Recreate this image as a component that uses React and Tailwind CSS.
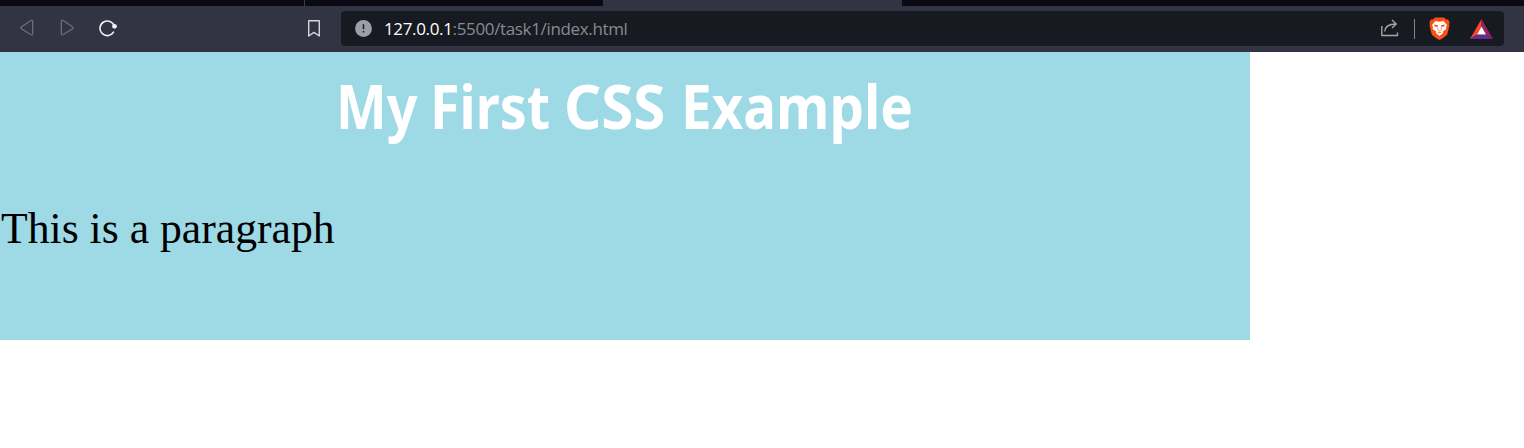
import React from "react";

function TabStrip() {
  return (
    <div className="flex h-[6px] bg-[#0b0a14]">
      <div className="w-[305px] border-r border-[#3b3c45]" />
      <div className="w-[298px]" />
      <div className="w-[299px] bg-[#323443]" />
    </div>
  );
}

function Toolbar() {
  return (
    <div className="flex h-[46px] items-start bg-[#323443] pt-[5px]">
      <div className="flex h-[34px] w-[341px] items-center">
        <svg className="ml-[20px] h-[18px] w-[14px]" viewBox="0 0 14 18" fill="none" stroke="#6c6e7a" strokeWidth="1.3">
          <path d="M1.3 8 10.8 1.5Q12.7.5 12.7 2.7V14.3Q12.7 16.5 10.8 15.5L1.3 9.7Q.5 9 1.3 8Z" />
        </svg>
        <svg className="ml-[26px] h-[18px] w-[14px]" viewBox="0 0 14 18" fill="none" stroke="#6c6e7a" strokeWidth="1.3">
          <path d="M12.7 8 3.2 1.5Q1.3.5 1.3 2.7V14.3Q1.3 16.5 3.2 15.5L12.7 9.7Q13.5 9 12.7 8Z" />
        </svg>
        <svg className="ml-[25px] h-[18px] w-[18px]" viewBox="0 0 18 18" fill="none" stroke="#f0f0f2" strokeWidth="1.6">
          <path d="M15.3 7.2A7.3 7.3 0 1 0 14.5 13.2" strokeLinecap="round" />
          <circle cx="15.5" cy="7.3" r="2.4" fill="#f0f0f2" stroke="none" />
        </svg>
        <svg className="ml-[190px] h-[18px] w-[14px]" viewBox="0 0 14 18" fill="none" stroke="#d6d6dc" strokeWidth="1.4">
          <path d="M1.7 1.7H12.3V17L7 13.4 1.7 17Z" strokeLinejoin="round" />
        </svg>
      </div>
      <div className="flex h-[35px] w-[1163px] items-center rounded-[4px] bg-[#171a20]">
        <svg className="ml-[14px] h-[17px] w-[17px]" viewBox="0 0 17 17">
          <circle cx="8.5" cy="8.5" r="8.4" fill="#9c9ea9" />
          <path d="M8.5 4.2V9.2M8.5 11V12.6" stroke="#1b1d25" strokeWidth="1.5" />
        </svg>
        <div className="ml-[12px] w-[245px] whitespace-nowrap font-['Open_Sans','Noto_Sans',sans-serif] text-[17px] leading-[24px] tracking-[-0.35px] text-[#878a93]">
          <span className="text-white">127.0.0.1</span>:5500/task1/index.html
        </div>
        <div className="ml-auto flex h-full items-center">
          <svg className="mb-px h-[20px] w-[20px]" viewBox="0 0 20 20" fill="none" stroke="#a5a6aa" strokeWidth="1.4">
            <path d="M1.8 8V17.5H17.5V14.5" strokeLinejoin="round" />
            <path d="M4.8 13.5C5 8.5 8.8 6 16 6M12 2 16.2 6 12 10" />
          </svg>
          <div className="ml-[14px] h-[20px] w-px bg-[#85868a]" />
          <svg className="ml-[14px] h-[23px] w-[21px]" viewBox="0 0 21 23">
            <path d="M6 .5H15L17 2.6 19 2.4 20.7 5.2 20 7.2 20.5 8.5 18.3 17.2Q17.6 19 10.5 23 3.4 19 2.7 17.2L.5 8.5 1 7.2.3 5.2 2 2.4 4 2.6Z" fill="#fb4f14" />
            <path d="M6.5 4 10.5 4.7 14.5 4 18 8 17 10 17.3 12 13.6 14.7 14.2 16.1 10.5 19 6.8 16.1 7.4 14.7 3.7 12 4 10 3 8Z" fill="white" />
            <path d="M5 7.5 9 8.2 8.4 10 5.8 9.4ZM16 7.5 12 8.2 12.6 10 15.2 9.4ZM8.7 10 9.5 11.2 8.4 12.2 10.5 13.7 12.6 12.2 11.5 11.2 12.3 10 12.8 12.5 10.5 14.5 8.2 12.5ZM7.5 14.6 10.5 15.6 13.5 14.6 10.5 16.4Z" fill="#fb4f14" />
          </svg>
          <svg className="ml-[20px] mr-[11px] h-[20px] w-[23px]" viewBox="0 0 23 20">
            <path d="M11.5 0 0 20 7 15.5 11.5 7.5Z" fill="#ff4724" />
            <path d="M11.5 0V7.5L16 15.5 23 20Z" fill="#9e1f63" />
            <path d="M0 20 7 15.5H16L23 20Z" fill="#662d91" />
            <path d="M11.5 7.5 16 15.5H7Z" fill="white" />
          </svg>
        </div>
      </div>
    </div>
  );
}

export default function App() {
  return (
    <div className="h-[448px] w-[1524px] overflow-hidden bg-white">
      <TabStrip />
      <Toolbar />
      <main className="h-[288px] w-[1250px] bg-[#9ed9e6] pt-[11px] text-black">
        <h1 className="flex h-[84px] whitespace-nowrap pl-[336px] font-['Noto_Sans','Open_Sans',sans-serif] text-[61.5px] font-bold leading-[84px] text-white">
          <span className="w-[94px] origin-left scale-x-[0.875]">My </span>
          <span className="w-[134px] origin-left scale-x-[0.875]">First </span>
          <span className="w-[117px] origin-left scale-x-[0.945]">CSS </span>
          <span className="w-[240px] origin-left scale-x-[0.89]">Example</span>
        </h1>
        <p className="mt-[55px] whitespace-nowrap pl-px font-['Liberation_Serif',serif] text-[43.7px] leading-[52px]">This is a paragraph</p>
      </main>
    </div>
  );
}
